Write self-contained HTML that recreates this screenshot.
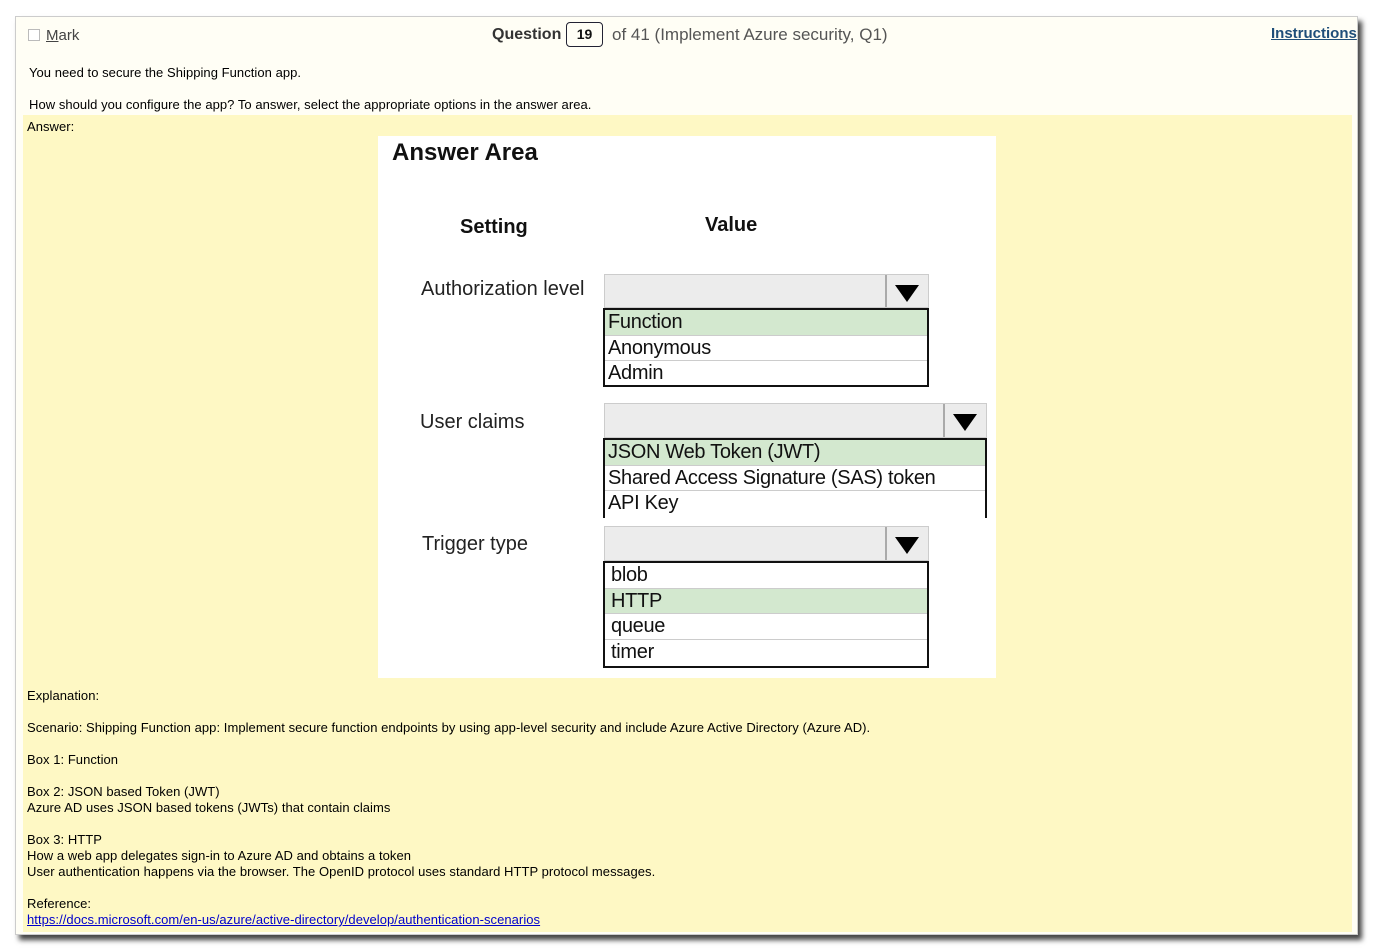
<!DOCTYPE html>
<html><head><meta charset="utf-8"><style>
*{margin:0;padding:0;box-sizing:border-box}
body{width:1375px;height:951px;background:#fff;position:relative;overflow:hidden;font-family:"Liberation Sans",Arial,sans-serif}
.frame{position:absolute;left:15px;top:16px;width:1343px;height:919px;background:#fffef5;border:1px solid #ccc;box-shadow:4px 5px 5px #444}
.a{position:absolute;white-space:nowrap}
.s{font-size:13px;color:#000;letter-spacing:0.05px;line-height:14px}
.yel{position:absolute;left:23px;top:115px;width:1329px;height:817px;background:#fef8c4}
.img{position:absolute;left:378px;top:136px;width:618px;height:542px;background:#fff}
.dd{position:absolute;background:#ececec;border:1px solid #ccc}
.arr{position:absolute;background:#ececec;border-left:2px solid #aaa}
.arr:after{content:"";position:absolute;left:8px;top:10px;border-left:12px solid transparent;border-right:12px solid transparent;border-top:17px solid #000}
.list{position:absolute;border:2px solid #111;background:#fff}
.list div{height:25.5px;font-size:20px;line-height:25px;padding-left:3px;border-bottom:1px solid #ccc;color:#111;letter-spacing:-0.3px}
.list div.g{background:#d3e8cf}
.lbl{position:absolute;font-size:20px;color:#222;white-space:nowrap}
</style></head><body>
<div class="frame"></div>
<div class="a" style="left:28px;top:29px;width:12px;height:12px;border:1px solid #bbb;background:#fff"></div>
<div class="a" style="left:46px;top:27px;font-size:15px;color:#444"><u>M</u>ark</div>
<div class="a" style="left:492px;top:26px;font-size:16px;color:#444"><b style="font-weight:bold;color:#333">Question</b></div>
<div class="a" style="left:566px;top:22px;width:37px;height:25px;border:1px solid #223;border-radius:4px;font-size:14px;font-weight:bold;text-align:center;line-height:23px;color:#111">19</div>
<div class="a" style="left:612px;top:25px;font-size:17px;color:#555">of 41 (Implement Azure security, Q1)</div>
<div class="a" style="left:1271px;top:25px;font-size:15px;font-weight:bold;color:#1f4e79;text-decoration:underline">Instructions</div>
<div class="a s" style="left:29px;top:66px">You need to secure the Shipping Function app.</div>
<div class="a s" style="left:29px;top:98px">How should you configure the app? To answer, select the appropriate options in the answer area.</div>
<div class="yel"></div>
<div class="a s" style="left:27px;top:120px">Answer:</div>
<div class="img"></div>
<div class="a" style="left:392px;top:139px;font-size:24px;font-weight:bold;color:#111">Answer Area</div>
<div class="a" style="left:460px;top:216px;font-size:20px;font-weight:bold;color:#111">Setting</div>
<div class="a" style="left:705px;top:214px;font-size:20px;font-weight:bold;color:#111">Value</div>
<div class="lbl" style="left:421px;top:278px">Authorization level</div>
<div class="lbl" style="left:420px;top:411px">User claims</div>
<div class="lbl" style="left:422px;top:533px">Trigger type</div>

<div class="dd" style="left:604px;top:274px;width:325px;height:34px"></div>
<div class="arr" style="left:885px;top:275px;width:43px;height:32px"></div>
<div class="list" style="left:603px;top:308px;width:326px;height:79px"><div class="g">Function</div><div>Anonymous</div><div style="border:0">Admin</div></div>

<div class="dd" style="left:604px;top:403px;width:383px;height:35px"></div>
<div class="arr" style="left:943px;top:404px;width:43px;height:33px"></div>
<div class="list" style="left:603px;top:438px;width:384px;height:80px;border-bottom:0"><div class="g">JSON Web Token (JWT)</div><div>Shared Access Signature (SAS) token</div><div style="border:0">API Key</div></div>

<div class="dd" style="left:604px;top:526px;width:325px;height:35px"></div>
<div class="arr" style="left:885px;top:527px;width:43px;height:33px"></div>
<div class="list" style="left:603px;top:561px;width:326px;height:107px"><div style="padding-left:6px">blob</div><div class="g" style="padding-left:6px">HTTP</div><div style="padding-left:6px">queue</div><div style="border:0;padding-left:6px">timer</div></div>

<div class="a s" style="left:27px;top:689px">Explanation:</div>
<div class="a s" style="left:27px;top:721px">Scenario: Shipping Function app: Implement secure function endpoints by using app-level security and include Azure Active Directory (Azure AD).</div>
<div class="a s" style="left:27px;top:753px">Box 1: Function</div>
<div class="a s" style="left:27px;top:785px">Box 2: JSON based Token (JWT)</div>
<div class="a s" style="left:27px;top:801px">Azure AD uses JSON based tokens (JWTs) that contain claims</div>
<div class="a s" style="left:27px;top:833px">Box 3: HTTP</div>
<div class="a s" style="left:27px;top:849px">How a web app delegates sign-in to Azure AD and obtains a token</div>
<div class="a s" style="left:27px;top:865px">User authentication happens via the browser. The OpenID protocol uses standard HTTP protocol messages.</div>
<div class="a s" style="left:27px;top:897px">Reference:</div>
<div class="a s" style="left:27px;top:913px;color:#00c;text-decoration:underline">https://docs.microsoft.com/en-us/azure/active-directory/develop/authentication-scenarios</div>
</body></html>
